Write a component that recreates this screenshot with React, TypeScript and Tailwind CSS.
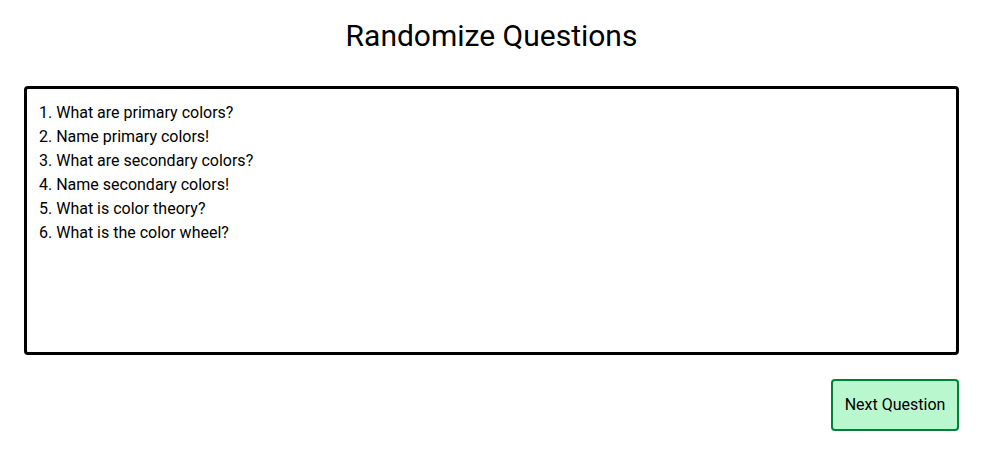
import React, { useEffect, useRef } from "react";

export default function App() {
  const text =
    "1. What are primary colors?\n2. Name primary colors!\n3. What are secondary colors?\n4. Name secondary colors!\n5. What is color theory?\n6. What is the color wheel?";
  const ref = useRef<HTMLTextAreaElement>(null);
  useEffect(() => {
    const el = ref.current;
    if (el) {
      el.focus();
      el.setSelectionRange(el.value.length, el.value.length);
    }
  }, []);
  return (
    <div className="min-h-screen bg-white font-['Roboto',sans-serif] text-black">
      <div className="ml-6 mr-8 flex flex-col">
        <h1 className="pt-[18px] text-center text-[30px] leading-9 font-normal">Randomize Questions</h1>
        <textarea
          ref={ref}
          defaultValue={text}
          className="mt-[32px] h-[269px] w-full resize-none rounded-[4px] border-[3px] border-black px-3 pt-3 pb-2 text-base leading-6 caret-black outline-none"
        />
        <div className="mt-6 flex justify-end">
          <button className="h-[52px] w-[128px] rounded-[4px] border-2 border-green-700 bg-green-200 text-base">
            Next Question
          </button>
        </div>
      </div>
    </div>
  );
}
